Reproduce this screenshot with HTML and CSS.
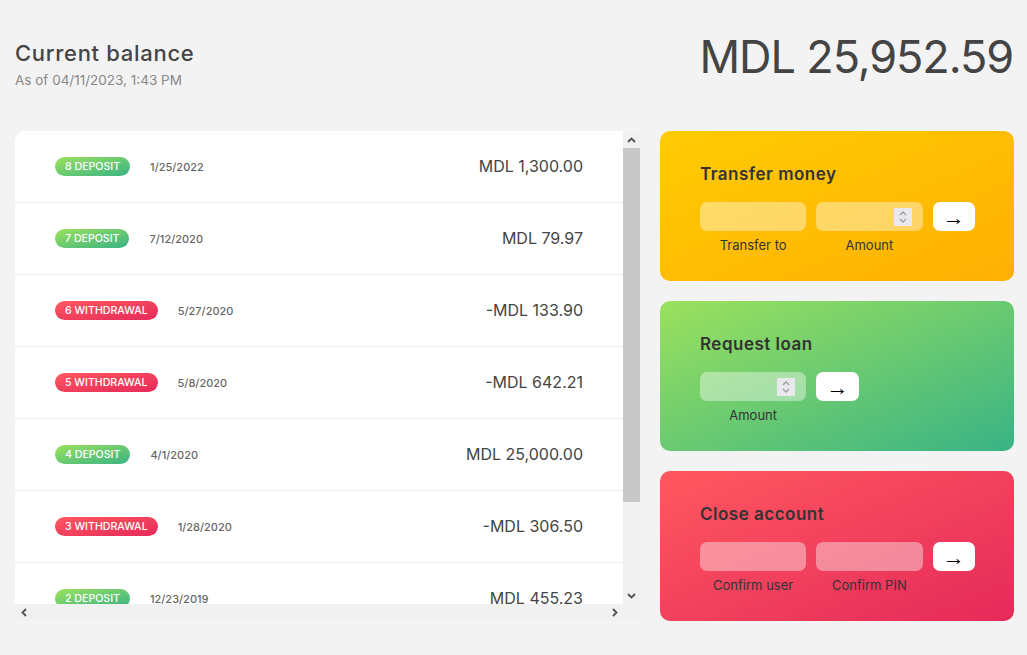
FILE: index.html
```html
<!DOCTYPE html>
<html lang="en">
<head>
<meta charset="utf-8">
<title>Bankist</title>
<link rel="stylesheet" href="styles.css">
</head>
<body>
<main class="app">
  <div class="balance">
    <div class="balance__info">
      <p class="balance__label">Current balance</p>
      <p class="balance__date">As of 04/11/2023, 1:43 PM</p>
    </div>
    <p class="balance__value">MDL 25,952.59</p>
  </div>

  <div class="content">
    <section class="movements-frame">
      <div class="movements">
        <div class="movements__row">
          <span class="movements__type movements__type--deposit">8 deposit</span>
          <span class="movements__date">1/25/2022</span>
          <span class="movements__value">MDL 1,300.00</span>
        </div>
        <div class="movements__row">
          <span class="movements__type movements__type--deposit">7 deposit</span>
          <span class="movements__date">7/12/2020</span>
          <span class="movements__value">MDL 79.97</span>
        </div>
        <div class="movements__row">
          <span class="movements__type movements__type--withdrawal">6 withdrawal</span>
          <span class="movements__date">5/27/2020</span>
          <span class="movements__value">-MDL 133.90</span>
        </div>
        <div class="movements__row">
          <span class="movements__type movements__type--withdrawal">5 withdrawal</span>
          <span class="movements__date">5/8/2020</span>
          <span class="movements__value">-MDL 642.21</span>
        </div>
        <div class="movements__row">
          <span class="movements__type movements__type--deposit">4 deposit</span>
          <span class="movements__date">4/1/2020</span>
          <span class="movements__value">MDL 25,000.00</span>
        </div>
        <div class="movements__row">
          <span class="movements__type movements__type--withdrawal">3 withdrawal</span>
          <span class="movements__date">1/28/2020</span>
          <span class="movements__value">-MDL 306.50</span>
        </div>
        <div class="movements__row">
          <span class="movements__type movements__type--deposit">2 deposit</span>
          <span class="movements__date">12/23/2019</span>
          <span class="movements__value">MDL 455.23</span>
        </div>
      </div>
      <div class="vscroll">
        <div class="sb-btn">
          <svg width="9" height="6" viewBox="0 0 9 6"><polyline points="1,5 4.5,1.5 8,5" fill="none" stroke="#505050" stroke-width="1.8"/></svg>
        </div>
        <div class="vscroll__thumb"></div>
        <div class="vscroll__track"></div>
        <div class="sb-btn">
          <svg width="9" height="6" viewBox="0 0 9 6"><polyline points="1,1 4.5,4.5 8,1" fill="none" stroke="#505050" stroke-width="1.8"/></svg>
        </div>
      </div>
      <div class="hscroll">
        <div class="sb-btn">
          <svg width="6" height="9" viewBox="0 0 6 9"><polyline points="5,1 1.5,4.5 5,8" fill="none" stroke="#505050" stroke-width="1.8"/></svg>
        </div>
        <div class="hscroll__track"></div>
        <div class="sb-btn">
          <svg width="6" height="9" viewBox="0 0 6 9"><polyline points="1,1 4.5,4.5 1,8" fill="none" stroke="#505050" stroke-width="1.8"/></svg>
        </div>
      </div>
      <div class="sb-corner"></div>
    </section>

    <section class="operations">
      <div class="operation operation--transfer">
        <h2>Transfer money</h2>
        <form class="form">
          <input type="text" class="form__input">
          <div class="form__input form__input--num"><span class="spin"><svg width="10" height="14" viewBox="0 0 10 14"><polyline points="2,5 5,2 8,5" fill="none" stroke="#9a9aa0" stroke-width="1.3"/><polyline points="2,9 5,12 8,9" fill="none" stroke="#9a9aa0" stroke-width="1.3"/></svg></span></div>
          <button type="button" class="form__btn">→</button>
          <label class="form__label">Transfer to</label>
          <label class="form__label">Amount</label>
        </form>
      </div>
      <div class="operation operation--loan">
        <h2>Request loan</h2>
        <form class="form form--loan">
          <div class="form__input form__input--num"><span class="spin"><svg width="10" height="14" viewBox="0 0 10 14"><polyline points="2,5 5,2 8,5" fill="none" stroke="#9a9aa0" stroke-width="1.3"/><polyline points="2,9 5,12 8,9" fill="none" stroke="#9a9aa0" stroke-width="1.3"/></svg></span></div>
          <button type="button" class="form__btn">→</button>
          <label class="form__label form__label--loan">Amount</label>
        </form>
      </div>
      <div class="operation operation--close">
        <h2>Close account</h2>
        <form class="form">
          <input type="text" class="form__input">
          <input type="text" class="form__input">
          <button type="button" class="form__btn">→</button>
          <label class="form__label">Confirm user</label>
          <label class="form__label">Confirm PIN</label>
        </form>
      </div>
    </section>
  </div>
</main>
</body>
</html>
```

FILE: styles.css
```css
* {
  margin: 0;
  padding: 0;
  box-sizing: border-box;
}

body {
  font-family: Inter, "Noto Sans", sans-serif;
  color: #444;
  background-color: #f3f3f3;
  width: 1027px;
  height: 655px;
  overflow: hidden;
}

.app {
  padding: 0 13px 0 15px;
}

.balance {
  height: 111px;
  margin-bottom: 20px;
  display: flex;
  justify-content: space-between;
  align-items: flex-end;
  padding-bottom: 22px;
}

.balance__label {
  font-size: 22px;
  font-weight: 500;
  line-height: 28px;
  letter-spacing: 0.7px;
  color: #444;
  margin-bottom: 4px;
}

.balance__date {
  font-size: 13.5px;
  color: #888;
  line-height: 18px;
}

.balance__value {
  font-size: 45px;
  font-weight: 400;
  line-height: 54px;
  letter-spacing: -1.1px;
  color: #444;
  margin-right: 1px;
  margin-bottom: 5px;
}

.content {
  display: grid;
  grid-template-columns: 625px 1fr;
  gap: 20px;
}

/* movements */
.movements-frame {
  height: 490px;
  background: #fff;
  border-radius: 10px 0 0 0;
  overflow: hidden;
  display: grid;
  grid-template-columns: 1fr 17px;
  grid-template-rows: 1fr 17px;
}

.movements {
  overflow: hidden;
}

.movements__row {
  height: 72px;
  padding: 0 40px;
  display: flex;
  align-items: center;
  border-bottom: 1px solid #eee;
}

.movements__type {
  font-size: 10.6px;
  text-transform: uppercase;
  font-weight: 500;
  color: #fff;
  line-height: 19px;
  padding: 0 10px;
  border-radius: 10px;
  margin-right: 20px;
}

.movements__type--deposit {
  background-image: linear-gradient(to top left, #39b385, #9be15d);
}

.movements__type--withdrawal {
  background-image: linear-gradient(to top left, #e52a5a, #ff585f);
}

.movements__date {
  font-size: 11px;
  font-weight: 500;
  color: #666;
}

.movements__value {
  font-size: 16px;
  margin-left: auto;
  margin-top: -1px;
  color: #444;
}

/* fake scrollbars */
.vscroll {
  background: #f1f1f1;
  display: flex;
  flex-direction: column;
}

.vscroll__thumb {
  height: 354px;
  background: #c8c8c8;
}

.vscroll__track {
  flex: 1;
}

.sb-btn {
  width: 17px;
  height: 17px;
  flex: none;
  display: flex;
  align-items: center;
  justify-content: center;
}

.hscroll {
  background: #f1f1f1;
  display: flex;
}

.hscroll__track {
  flex: 1;
}

.sb-corner {
  background: #f1f1f1;
}

/* operations */
.operations {
  display: flex;
  flex-direction: column;
  gap: 20px;
}

.operation {
  height: 150px;
  border-radius: 10px;
  padding: 30px 39px 0 40px;
  color: #333;
}

.operation--transfer {
  background-image: linear-gradient(to top left, #ffb003, #ffcb03);
}

.operation--loan {
  background-image: linear-gradient(to top left, #39b385, #9be15d);
}

.operation--close {
  background-image: linear-gradient(to top left, #e52a5a, #ff585f);
}

h2 {
  font-size: 17px;
  font-weight: 600;
  line-height: 26px;
  letter-spacing: 0.5px;
  color: #333;
  margin-bottom: 15px;
}

.form {
  display: grid;
  grid-template-columns: 2.5fr 2.5fr 1fr;
  grid-template-rows: 29px auto;
  gap: 4px 10px;
}

.form--loan {
  grid-template-columns: 2.5fr 1fr 2.5fr;
}

.form__label--loan {
  grid-row: 2;
}

.form__input {
  width: 100%;
  height: 29px;
  border: none;
  outline: none;
  background-color: rgba(255, 255, 255, 0.4);
  font-family: inherit;
  font-size: 15px;
  border-radius: 7px;
}

.form__input--num {
  display: flex;
  align-items: center;
  justify-content: flex-end;
  padding-right: 11px;
}

.spin {
  width: 18px;
  height: 18px;
  background: #e9e9ed;
  display: flex;
  align-items: center;
  justify-content: center;
}

.form__btn {
  border: none;
  border-radius: 7px;
  font-size: 22px;
  line-height: 29px;
  background-color: #fff;
  color: #000;
  font-family: "Noto Sans", sans-serif;
  font-weight: 300;
  height: 29px;
  overflow: hidden;
}

.form__label {
  font-size: 13px;
  line-height: 20px;
  text-align: center;
  color: #333;
}
```
